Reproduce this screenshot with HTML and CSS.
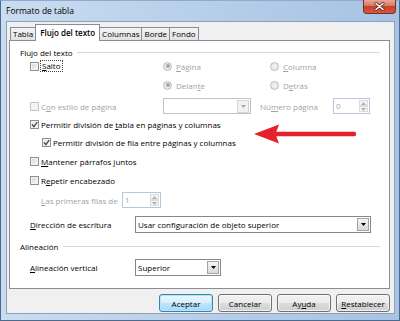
FILE: index.html
```html
<!DOCTYPE html>
<html lang="es">
<head>
    <meta charset="UTF-8">
    <title>Formato de tabla</title>
    <link rel="stylesheet" href="styles.css">
</head>
<body>
    <div class="window">
        <div class="titlebar">
            <span class="title">Formato de tabla</span>
            <span class="close">
                <svg width="11" height="9" viewBox="0 0 11 9">
                    <path d="M2 1.5L9 7.5M9 1.5L2 7.5" stroke="#6b2a20" stroke-width="3" stroke-linecap="round"/>
                    <path d="M2 1.5L9 7.5M9 1.5L2 7.5" stroke="#fff" stroke-width="1.6" stroke-linecap="round"/>
                </svg>
            </span>
        </div>

        <div class="client">
            <div class="tabs">
                <span class="tab">Tabla</span>
                <span class="tab active">Flujo del texto</span>
                <span class="tab">Columnas</span>
                <span class="tab">Borde</span>
                <span class="tab">Fondo</span>
            </div>

            <div class="panel">
                <div class="heading">Flujo del texto</div>

                <div class="row">
                    <span class="check cell-a">
                        <span class="box"></span>
                        <span class="focus"><u>S</u>alto</span>
                    </span>
                    <span class="option cell-b off">
                        <span class="radio on"></span><span><u>P</u>ágina</span>
                    </span>
                    <span class="option off">
                        <span class="radio"></span><span><u>C</u>olumna</span>
                    </span>
                </div>

                <div class="row">
                    <span class="cell-a"></span>
                    <span class="option cell-b off">
                        <span class="radio on"></span><span>Delan<u>t</u>e</span>
                    </span>
                    <span class="option off">
                        <span class="radio"></span><span>D<u>e</u>trás</span>
                    </span>
                </div>

                <div class="row">
                    <span class="check cell-a off">
                        <span class="box"></span><span>C<u>o</u>n estilo de página</span>
                    </span>
                    <span class="combo off style-combo">
                        <span class="combo-text"></span>
                        <span class="combo-btn"><svg width="5" height="3" viewBox="0 0 5 3"><path d="M0 0h5L2.5 3z"/></svg></span>
                    </span>
                    <span class="num-label off">Nú<u>m</u>ero página</span>
                    <span class="spin off page-spin">
                        <span class="spin-text">0</span>
                        <span class="spin-btns">
                            <span><svg width="5" height="3" viewBox="0 0 5 3"><path d="M0 3h5L2.5 0z"/></svg></span>
                            <span><svg width="5" height="3" viewBox="0 0 5 3"><path d="M0 0h5L2.5 3z"/></svg></span>
                        </span>
                    </span>
                </div>

                <div class="row">
                    <span class="check">
                        <span class="box checked"><svg width="7" height="7" viewBox="0 0 7 7"><path d="M1 3.6L2.9 5.6L6.2 1.2" fill="none" stroke="#3d4b66" stroke-width="1.4"/></svg></span>
                        <span>Permitir división de <u>t</u>abla en páginas y columnas</span>
                    </span>
                </div>

                <div class="row sub">
                    <span class="check">
                        <span class="box checked"><svg width="7" height="7" viewBox="0 0 7 7"><path d="M1 3.6L2.9 5.6L6.2 1.2" fill="none" stroke="#3d4b66" stroke-width="1.4"/></svg></span>
                        <span>Permitir división de fila entre páginas y columnas</span>
                    </span>
                </div>

                <div class="row">
                    <span class="check">
                        <span class="box"></span><span><u>M</u>antener párrafos juntos</span>
                    </span>
                </div>

                <div class="row">
                    <span class="check">
                        <span class="box"></span><span>R<u>e</u>petir encabezado</span>
                    </span>
                </div>

                <div class="row sub-text">
                    <span class="rows-label off"><u>L</u>as primeras filas de</span>
                    <span class="spin off rows-spin">
                        <span class="spin-text">1</span>
                        <span class="spin-btns">
                            <span><svg width="5" height="3" viewBox="0 0 5 3"><path d="M0 3h5L2.5 0z"/></svg></span>
                            <span><svg width="5" height="3" viewBox="0 0 5 3"><path d="M0 0h5L2.5 3z"/></svg></span>
                        </span>
                    </span>
                </div>

                <div class="row">
                    <span class="field-label"><u>D</u>irección de escritura</span>
                    <span class="combo dir-combo">
                        <span class="combo-text">Usar configuración de objeto superior</span>
                        <span class="combo-btn"><svg width="5" height="3" viewBox="0 0 5 3"><path d="M0 0h5L2.5 3z"/></svg></span>
                    </span>
                </div>

                <div class="heading">Alineación</div>

                <div class="row">
                    <span class="field-label"><u>A</u>lineación vertical</span>
                    <span class="combo align-combo">
                        <span class="combo-text">Superior</span>
                        <span class="combo-btn"><svg width="5" height="3" viewBox="0 0 5 3"><path d="M0 0h5L2.5 3z"/></svg></span>
                    </span>
                </div>

                <svg class="arrow" width="108" height="26" viewBox="0 0 108 26">
                    <path d="M26 13H104" stroke="#e5222b" stroke-width="4.5" stroke-linecap="round"/>
                    <path d="M4 13L29 3.5L25.5 13L29 22.5Z" fill="#e5222b"/>
                </svg>
            </div>

            <div class="buttons">
                <button class="btn default">Aceptar</button>
                <button class="btn">Cancelar</button>
                <button class="btn">Ay<u>u</u>da</button>
                <button class="btn"><u>R</u>establecer</button>
            </div>
        </div>
    </div>
</body>
</html>
```

FILE: styles.css
```css
* {
    box-sizing: border-box;
}

body {
    margin: 0;
    font-family: "Open Sans", "Noto Sans", sans-serif;
    font-size: 8px;
    color: #000;
    white-space: nowrap;
}

u {
    text-underline-offset: 1px;
}

.window {
    width: 400px;
    height: 321px;
    display: flex;
    flex-direction: column;
    padding: 0 4px 6px 5px;
    border: 1px solid #4b6a8e;
    border-top-color: #8eaad0;
    background: linear-gradient(to right, #cadcf0, #b4cce8 60%, #a7c2e3);
}

.titlebar {
    height: 20px;
    display: flex;
    justify-content: space-between;
    align-items: flex-start;
}

.title {
    line-height: 20px;
    font-size: 8.5px;
}

.close {
    width: 33px;
    height: 14px;
    margin: -1px -1px 0 0;
    display: flex;
    align-items: center;
    justify-content: center;
    border: 1px solid #7a2e22;
    border-top: none;
    border-radius: 0 0 4px 4px;
    background: linear-gradient(#e8a898, #d87862 45%, #c4432b 50%, #d05a40);
}

.client {
    flex: 1;
    display: flex;
    flex-direction: column;
    background: #f0f0f0;
    border: 1px solid #8ca0bb;
}

/* tabs */

.tabs {
    height: 18px;
    display: flex;
    align-items: flex-end;
    padding-left: 3px;
}

.tab {
    height: 13px;
    padding: 0 2px;
    margin-right: -1px;
    line-height: 12px;
    border: 1px solid #898c95;
    border-bottom: none;
    background: linear-gradient(#f4f4f4, #e2e2e2);
}

.tab.active {
    position: relative;
    z-index: 1;
    height: 17px;
    margin-bottom: -1px;
    padding: 0 4px;
    line-height: 15px;
    font-weight: 600;
    background: #fff;
}

/* page */

.panel {
    position: relative;
    width: 381px;
    height: 249px;
    margin-left: 2px;
    padding: 3px 9px 0 10px;
    display: grid;
    grid-template-rows: 16px 12px 26px 16px 20px 16px 22px 16px 24px 24px 20px 22px;
    background: #fff;
    border: 1px solid #898c95;
}

.heading {
    display: flex;
    align-items: center;
}

.heading::after {
    content: "";
    flex: 1;
    height: 1px;
    margin-left: 4px;
    background: #d8d8d8;
}

.row {
    display: flex;
    align-items: center;
    padding-left: 10px;
}

.row.sub {
    padding-left: 22px;
}

.row.sub-text {
    padding-left: 21px;
}

.cell-a {
    width: 133px;
}

.cell-b {
    width: 107px;
}

.off {
    color: #a3a3a3;
}

.check {
    display: flex;
    align-items: center;
    gap: 2px;
}

.box {
    flex: none;
    width: 9px;
    height: 9px;
    display: flex;
    align-items: center;
    justify-content: center;
    border: 1px solid #8e8f8f;
    background: linear-gradient(135deg, #d6d6d6, #fbfbfb);
    box-shadow: inset 0 0 0 1px #f4f4f4;
}

.box.checked {
    background: linear-gradient(135deg, #e4e4e4, #ffffff);
}

.check.off .box {
    border-color: #c4c4c4;
    background: #f4f4f4;
}

.focus {
    margin-left: -1px;
    padding: 1px 1px;
    border: 1px dotted #444;
    line-height: 8px;
}

.option {
    display: flex;
    align-items: center;
    gap: 4px;
}

.radio {
    width: 9px;
    height: 9px;
    display: flex;
    align-items: center;
    justify-content: center;
    border-radius: 50%;
    border: 1px solid #bdbdbd;
    background: radial-gradient(#f6f6f6, #e0e0e0);
}

.radio.on::after {
    content: "";
    width: 4px;
    height: 4px;
    border-radius: 50%;
    background: #a8a8a8;
}

/* combo boxes */

.combo {
    height: 17px;
    display: flex;
    align-items: center;
    border: 1px solid #828790;
    background: #fff;
}

.combo-text {
    flex: 1;
    padding-left: 2px;
}

.combo-btn {
    width: 12px;
    height: 13px;
    margin-right: 1px;
    display: flex;
    align-items: center;
    justify-content: center;
    border: 1px solid #a3a3a3;
    background: linear-gradient(#f5f5f5, #d9d9d9);
}

.combo.off {
    border-color: #c2c2c2;
}

.combo.off .combo-btn {
    border-color: #d6d6d6;
    background: #f2f2f2;
    fill: #a8a8a8;
}

.style-combo {
    width: 88px;
    height: 16px;
}

.dir-combo {
    width: 236px;
}

.align-combo {
    width: 86px;
}

.field-label {
    width: 105px;
}

.num-label {
    width: 73px;
    margin-left: 9px;
}

.rows-label {
    width: 81px;
}

/* spin fields */

.spin {
    height: 16px;
    display: flex;
    border: 1px solid #b7c6da;
    background: #fff;
}

.spin-text {
    flex: 1;
    padding-left: 2px;
    line-height: 14px;
}

.spin-btns {
    width: 10px;
    display: flex;
    flex-direction: column;
    padding: 1px 1px 1px 0;
}

.spin-btns span {
    flex: 1;
    display: flex;
    align-items: center;
    justify-content: center;
    border: 1px solid #dcdcdc;
    background: #f4f4f4;
    fill: #b0b0b0;
}

.page-spin {
    width: 37px;
}

.rows-spin {
    width: 39px;
}

.arrow {
    position: absolute;
    left: 240px;
    top: 80px;
}

/* buttons */

.buttons {
    display: flex;
    justify-content: flex-end;
    gap: 5px;
    margin-top: 5px;
    padding-right: 4px;
}

.btn {
    width: 54px;
    height: 18px;
    padding: 0;
    font: inherit;
    color: #000;
    border: 1px solid #707070;
    border-radius: 3px;
    background: linear-gradient(#f2f2f2, #ebebeb 50%, #dddddd 50%, #cfcfcf);
    box-shadow: inset 0 0 0 1px rgba(255, 255, 255, 0.7);
}

.btn.default {
    border-color: #3c7fb1;
    background: linear-gradient(#eaf6fd, #d9f0fc 50%, #bee6fd 50%, #a7d9f5);
    box-shadow: inset 0 0 0 1px #b6e4fb;
}
```
